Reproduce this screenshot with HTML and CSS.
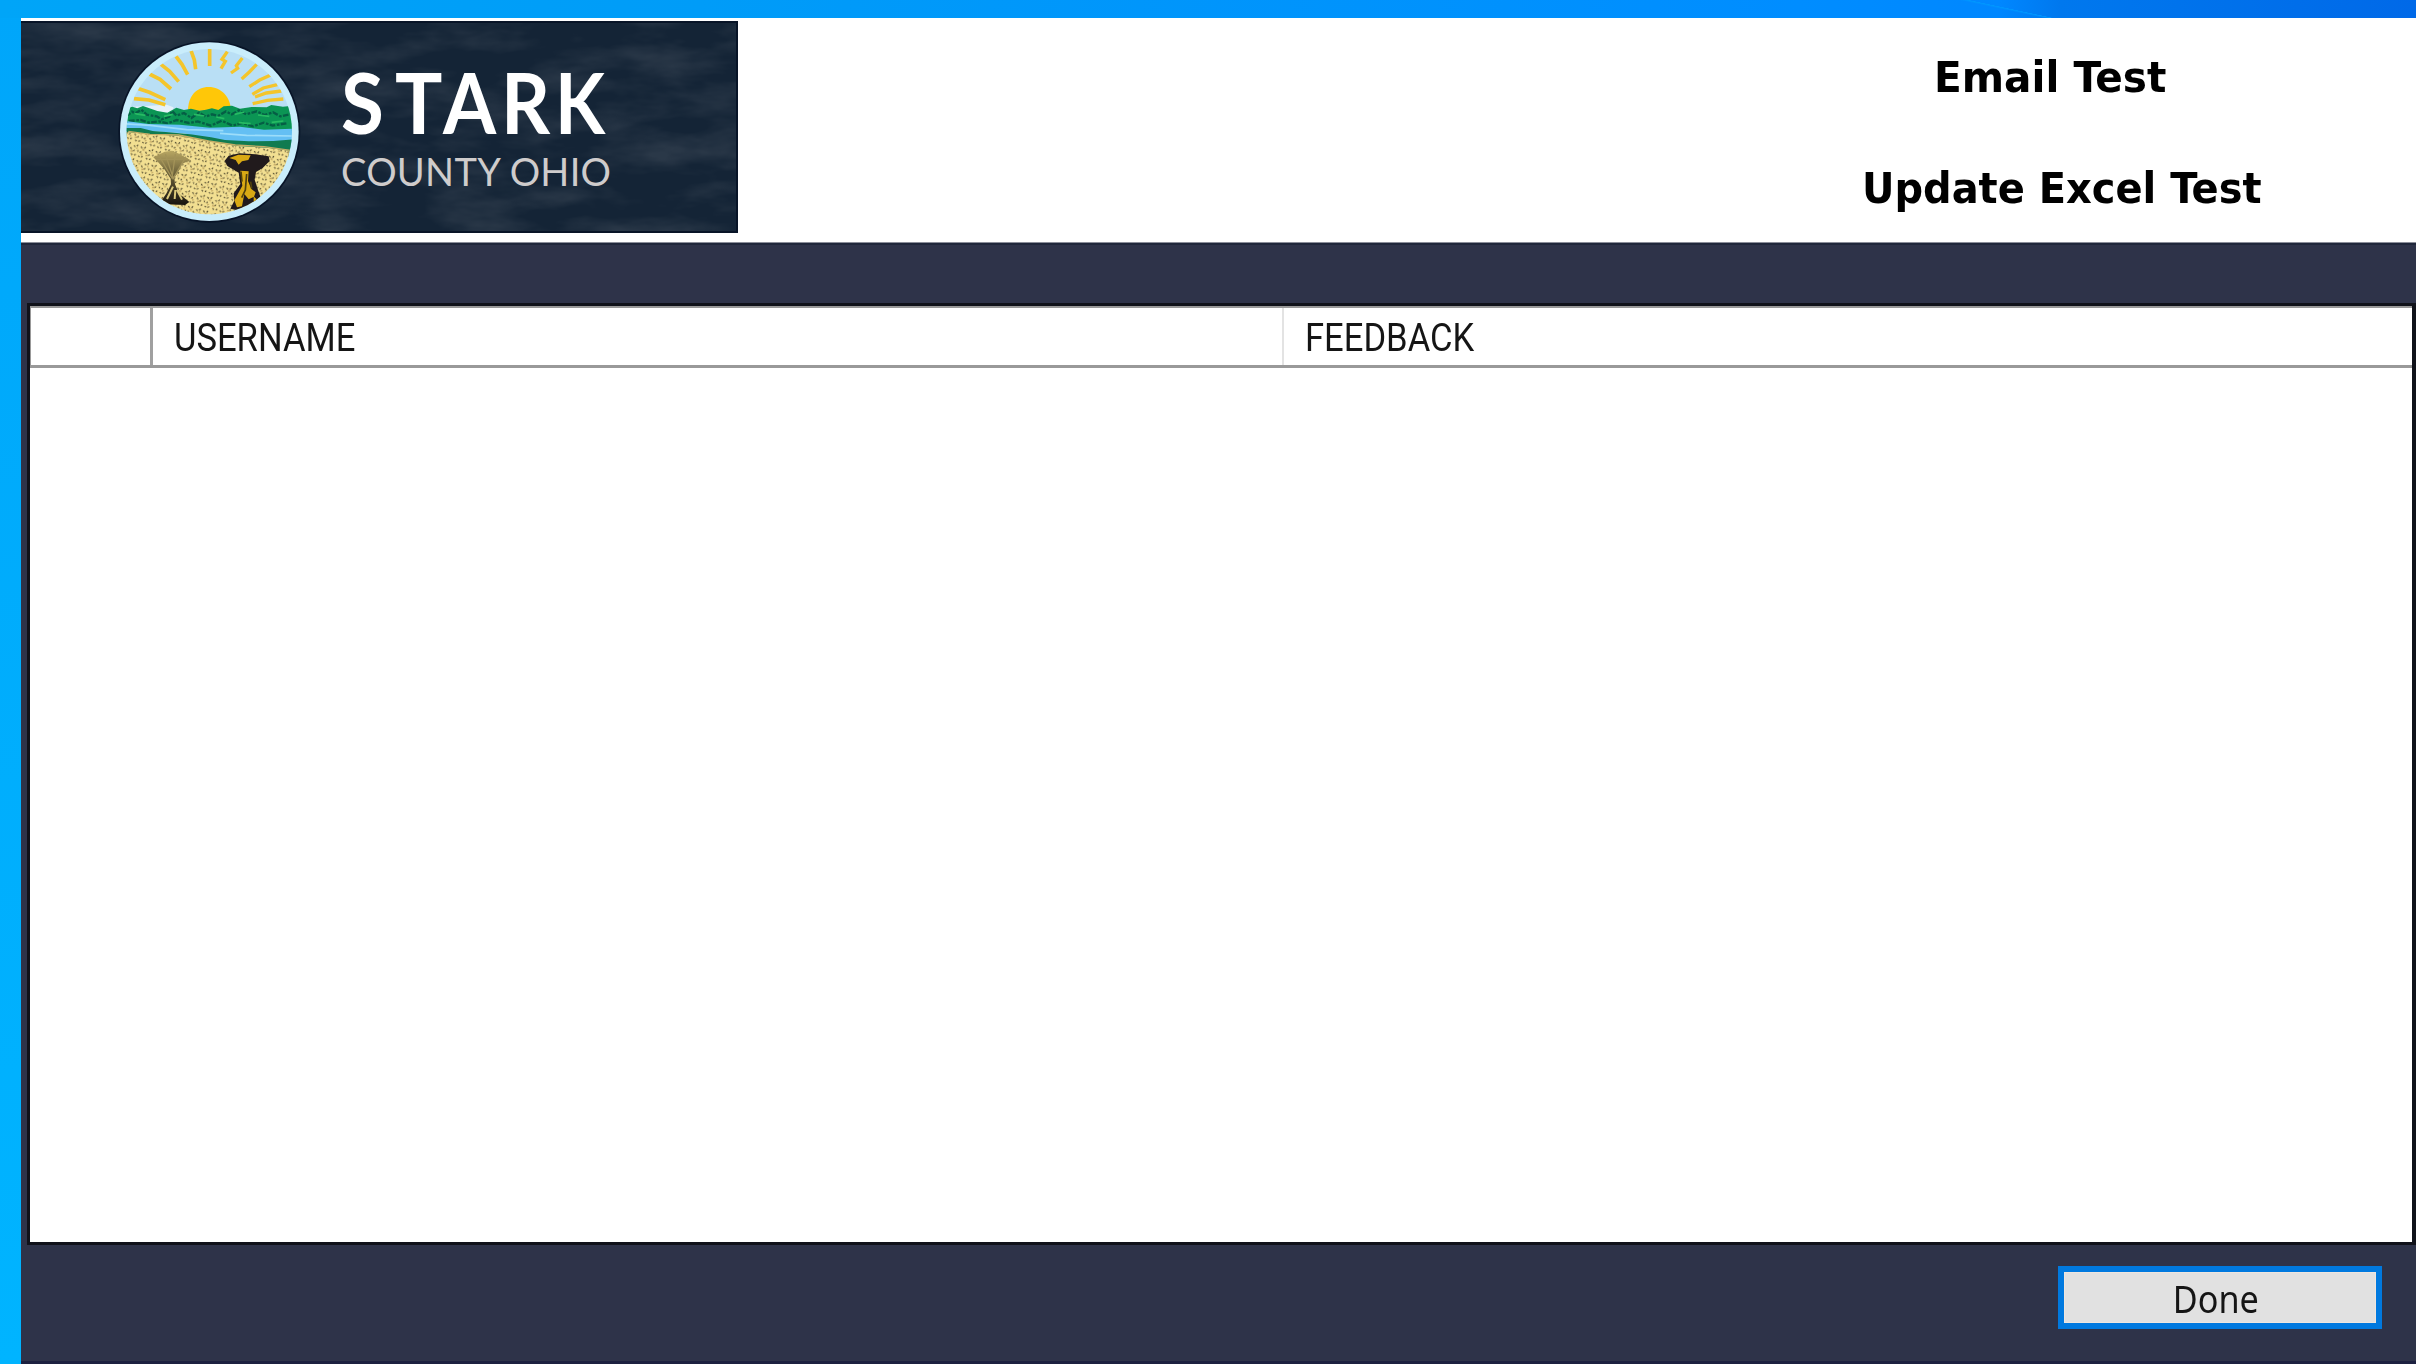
FILE: index.html
```html
<!DOCTYPE html>
<html lang="en">
<head>
<meta charset="utf-8">
<title>Stark County Ohio</title>
<link rel="stylesheet" href="styles.css">
</head>
<body>
<div class="desktop">
<main class="window">
  <header class="banner">
    <svg class="logo" viewBox="0 0 717 212" role="img" aria-label="Stark County Ohio">
      <defs>
        <filter id="haze" x="0" y="0" width="100%" height="100%">
          <feTurbulence type="fractalNoise" baseFrequency="0.012 0.035" numOctaves="4" seed="8"/>
          <feColorMatrix values="0 0 0 0 .23  0 0 0 0 .25  0 0 0 0 .28  2.2 0 0 0 -.85"/>
        </filter>
        <pattern id="grain" width="47" height="43" patternUnits="userSpaceOnUse" patternTransform="rotate(17)">
          <path d="M3 6l5 4M17 3l-3 6M29 9l5 3M41 4l-3 5M8 20l-3 5M21 17l4 5M35 22l-4 4M44 19l2 5M3 35l5 2M16 32l-3 5M28 34l4 4M42 33l-4 4" stroke="#4f482d" stroke-width="3.2"/>
          <path d="M10 13l6 2M24 28l7-2M38 14l4 1M9 29l4-3" stroke="#c0a460" stroke-width="4"/>
        </pattern>
        <clipPath id="disc"><circle cx="298" cy="305" r="248"/></clipPath>
        <linearGradient id="sheaf" x1="0" y1="0" x2="0" y2="1">
          <stop offset="0" stop-color="#b9a763"/><stop offset=".45" stop-color="#665c37"/><stop offset="1" stop-color="#17140f"/>
        </linearGradient>
      </defs>
      <rect width="717" height="212" fill="#142436"/>
      <rect width="717" height="212" filter="url(#haze)" opacity=".2"/>
      <path d="M0 1h717M716 0v212M0 211h717" fill="none" stroke="#081427" stroke-width="2"/>
      <g transform="translate(89 9) scale(.33333)">
        <circle cx="298" cy="305" r="273" fill="#081427"/>
        <circle cx="298" cy="305" r="268" fill="#c9edfb"/>
        <g clip-path="url(#disc)">
          <path d="M30 30h540v220H30z" fill="#b9dff5"/>
          <path d="M40 232l130-8 20 8v20H40z" fill="#e4f1fa"/>
          <g fill="none" stroke="#f4c52b" stroke-width="11">
            <path d="M299 54v54M243 62l10 28 4 28M198 79l18 24 17 31M150 101l29 23 27 31M118 132l32 16 33 29M82 175l36 12 48 22M72 206l45 4 49 14"/>
            <path d="M352 65l-16 23 10 6-13 22M397 84l-18 23 4 8-20 14M440 103l-22 23-23 21M484 134l-35 16-31 20M502 164l-42 10-33 19M514 183l-45 6-34 12M520 207l-48 4-44 10" stroke-width="10"/>
          </g>
          <path d="M234 242c0-42 24-71 62-71s66 31 67 71z" fill="#ffc708"/>
          <path d="M40 238l27-8 15 5 17-7 43 15 30 5 27-15 23 7 21-4 25 6 20-3 18-4 19 5 16-11 25-2 24 9 35-5 45 1 14-7 35 5 30-3v76H40z" fill="#0b9554"/>
          <path d="M48 260l18-15 10 5 18-11 16 15 30 5 15 9 23-8 9-17 12 14 23-8 22 15 23-16 20 12 19-7 18 5 24-14 17 9 22-12 22 12 31-9 23 11 26-8 22 12 37-8M57 273l35-3 24 8 31-4 26 6 27-10 37 9 26-5 40 13 32-15 33 15 29-8 32 10 32-11 27 9 46-8" fill="none" stroke="#055e45" stroke-width="7" stroke-dasharray="17 5 8 4"/>
          <path d="M74 251l32 5M162 259l26-6M252 253l31 5M319 261l24 5M374 253l29-7M444 255l34 4M485 277l35-4M386 278l36 3" stroke="#27bb63" stroke-width="5"/>
          <path d="M40 272l75 10 94 2 90 9 91-3 72 9 88-3v57l-100-4-126-16-102-23L40 298z" fill="#64bff3"/>
          <path d="M40 281l80 5 110 13 110 3M330 310l80 6 140 2" stroke="#9cddfa" stroke-width="5" fill="none"/>
          <path d="M40 294l52 0 36 9 49 4 64 6 62 9 42 8 71 4 74-1 60-5v55l-180-28L40 322z" fill="#107b50"/>
          <path d="M40 305l90 8 80 5 84 15 86 15 90 5 90 12v210H40z" fill="#f2df91"/>
          <path d="M40 305l90 8 80 5 84 15 86 15 90 5 90 12v210H40z" fill="url(#grain)"/>
          <path d="M55 304l65 9 86 2 90 18 80 12 86 5 80 11" fill="none" stroke="#c5ad67" stroke-width="4"/>
          <path d="M130 382l34-17 22-3 23 10 33 19-26 10-8 18-15 24 2 20 12 28 31 25-13 9-77-3 22-33 13-26-1-17-20-30-20-22z" fill="url(#sheaf)"/>
          <path d="M144 372l42 72 10-72M166 372l24 73 38-65M138 389l95-2" stroke="#a39359" stroke-width="4" fill="none"/>
          <path d="M189 470l-18 37M201 480l15 29M196 480l-2 27" stroke="#dcca7c" stroke-width="6"/>
          <path d="M344 392l12-15 32-7 48 3 40 6 3 14-21 21-20 12-4 23 11 34 8 22-50 40-42-9 12-24-2-22 20-28-5-34-34-20z" fill="#211a1c"/>
          <path d="M358 384l27-10 37 2-7 14-19 4-10 10-9-14zM391 422l25 2-2 29 10 24 13 10-5 13-16 8-13-16-7 37-15 3-8-21 15-27 9-17-3-23zM431 499l9 9-9 12z" fill="#d9a914"/>
          <path d="M410 432l-4 48-11 23M393 425l3 30M422 455l3 21" stroke="#51410d" stroke-width="5" fill="none"/>
        </g>
      </g>
      <g class="logo-name">
        <text transform="translate(320 113) scale(.92 1)">S</text>
        <text transform="translate(374 113) scale(.93 1)">T</text>
        <text transform="translate(422 113) scale(.9 1)">A</text>
        <text transform="translate(480 113) scale(.9 1)">R</text>
        <text transform="translate(534 113) scale(.86 1)">K</text>
      </g>
      <text class="logo-place" x="320" y="165" textLength="270">COUNTY OHIO</text>
    </svg>
    <nav class="tests">
      <span class="test email">Email Test</span>
      <span class="test excel">Update Excel Test</span>
    </nav>
  </header>
  <section class="body">
    <div class="grid">
      <div class="grid-head">
        <div class="corner"></div>
        <div class="col"><span class="user">USERNAME</span></div>
        <div class="col last"><span class="feed">FEEDBACK</span></div>
      </div>
    </div>
    <footer class="actions"><button class="done"><span>Done</span></button></footer>
  </section>
</main>
</div>
</body>
</html>
```
FILE: styles.css
```css
* { box-sizing: border-box; }
body { margin: 0; }
.desktop {
  width: 2416px; height: 1364px; padding: 18px 0 0 21px; overflow: hidden;
  background:
    linear-gradient(12deg, transparent 45%, #0098ff 50%, transparent 51%) 1960px 0 / 100px 18px no-repeat,
    linear-gradient(90deg, #00a5f8 0, #009cf8 700px, #008dff 1800px, #0087ff 2000px, #0078ee 2060px, #0069e8 2416px) 0 0 / 2416px 18px no-repeat,
    linear-gradient(180deg, #00a6fa, #00b4ff);
}
.window { height: 1346px; display: flex; flex-direction: column; background: #2e3349; }
.banner {
  height: 225px; flex: none; padding-top: 3px; display: flex; justify-content: space-between;
  background: #fff; border-bottom: 1px solid #8b8e99;
}
.logo { width: 717px; height: 212px; display: block; }
.logo-name { font: 700 85px Lato, sans-serif; fill: #fff; }
.logo-place { font: 400 38px Lato, sans-serif; fill: #cfcccc; }
.tests { width: 616px; padding-top: 28px; display: flex; flex-direction: column; gap: 55px; }
.test {
  font: bold 43px/56px "DejaVu Sans Condensed", "DejaVu Sans", sans-serif;
  font-stretch: condensed; color: #000; white-space: nowrap; transform-origin: 0 50%;
  align-self: flex-start;
}
.email { margin-left: 134px; transform: scaleX(1.05); }
.excel { margin-left: 62px; transform: scaleX(1.033); }
.body { flex: 1; display: flex; flex-direction: column; padding: 58px 0 0 6px; border-top: 2px solid #20273b; border-bottom: 3px solid #1d2140; }
.grid { height: 942px; flex: none; background: #fff; border: 3px solid #10121a; border-right-width: 4px; }
.grid-head {
  height: 62px; display: flex; border: solid #999; border-width: 2px 0 3px 1px;
}
.corner { width: 122px; border-right: 3px solid #a0a0a0; }
.col { width: 1131px; padding-left: 21px; border-right: 2px solid #e3e3e3; }
.col.last { flex: 1; border: 0; }
.col span {
  display: inline-block; font: 38px/60px Roboto, sans-serif; color: #151515;
  transform: scaleX(.91); transform-origin: 0 50%;
}
.actions { display: flex; justify-content: flex-end; padding: 21px 34px 0 0; }
.done {
  width: 324px; height: 63px; padding: 0 8px 0 0; border: 6px solid #0079df; background: #e1e1e1;
  box-shadow: inset 0 0 0 1px #eee6df; border-radius: 0;
  font: 38px/50px "Noto Sans", sans-serif; color: #151515;
}
.done span { display: inline-block; transform: scaleX(.9); }
```
